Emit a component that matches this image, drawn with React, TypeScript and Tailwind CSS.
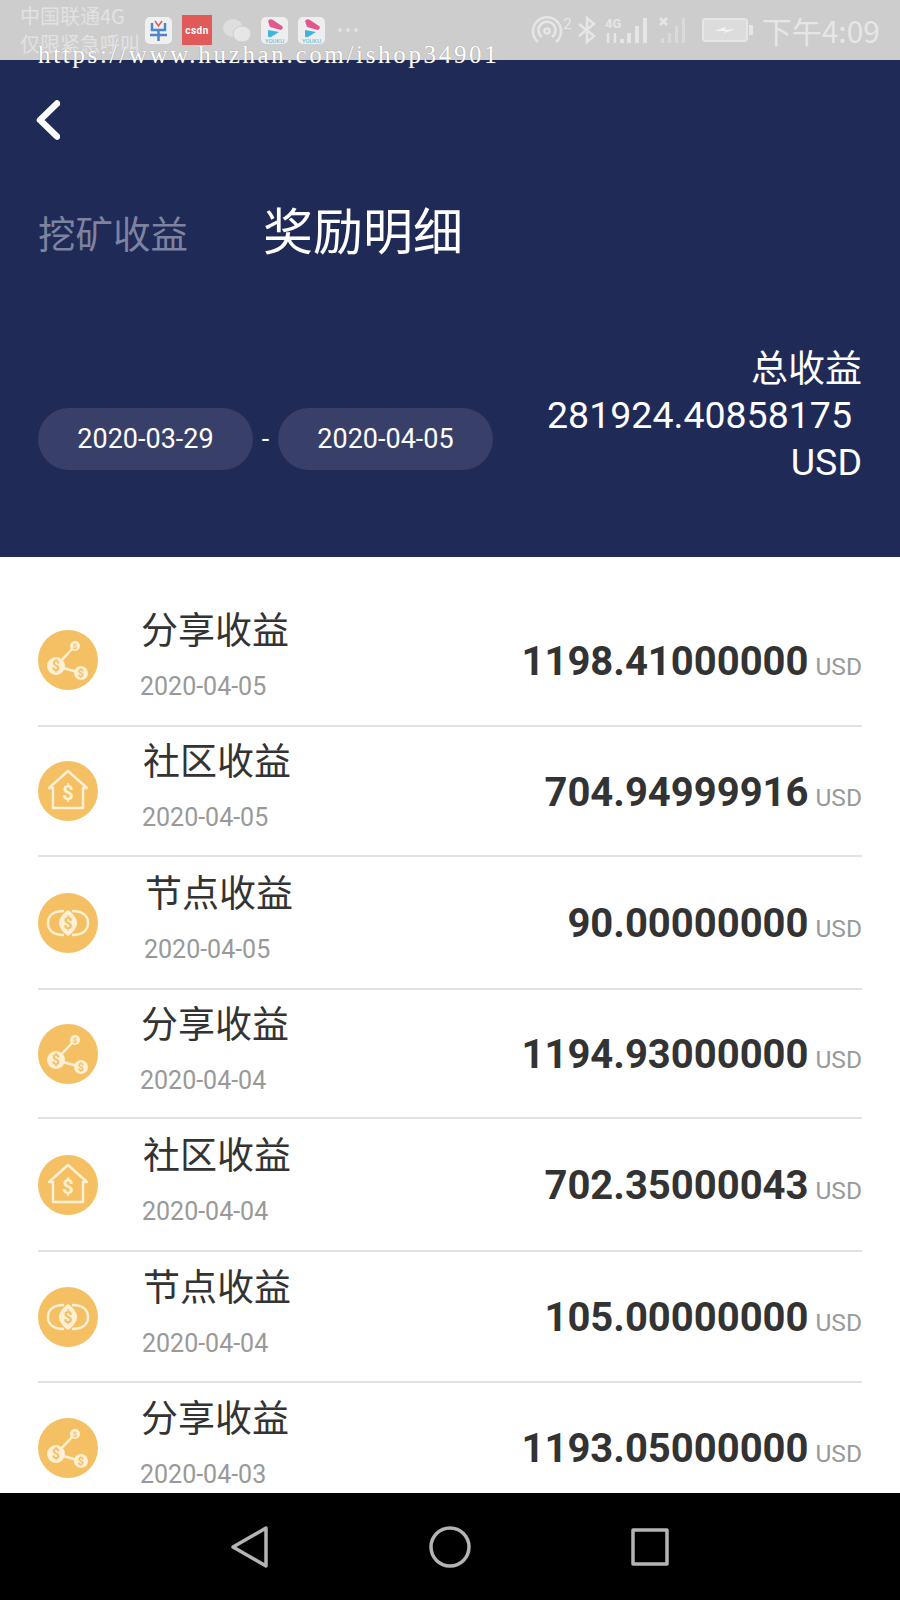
const cjk = "font-['Noto_Sans_CJK_SC','Noto_Sans',sans-serif]"

interface Row {
  kind: "share" | "community" | "node"
  title: string
  date: string
  amount: string
  height: string
  indent: string
}

const ROWS: Row[] = [
  { kind: "share", title: "分享收益", date: "2020-04-05", amount: "1198.41000000", height: "h-[132px]", indent: "ml-[43px]" },
  { kind: "community", title: "社区收益", date: "2020-04-05", amount: "704.94999916", height: "h-[130px]", indent: "ml-[45px]" },
  { kind: "node", title: "节点收益", date: "2020-04-05", amount: "90.00000000", height: "h-[133px]", indent: "ml-[47px]" },
  { kind: "share", title: "分享收益", date: "2020-04-04", amount: "1194.93000000", height: "h-[129px]", indent: "ml-[43px]" },
  { kind: "community", title: "社区收益", date: "2020-04-04", amount: "702.35000043", height: "h-[133px]", indent: "ml-[45px]" },
  { kind: "node", title: "节点收益", date: "2020-04-04", amount: "105.00000000", height: "h-[131px]", indent: "ml-[45px]" },
  { kind: "share", title: "分享收益", date: "2020-04-03", amount: "1193.05000000", height: "h-[131px]", indent: "ml-[43px]" },
]

function RowIcon({ kind }: { kind: Row["kind"] }) {
  return (
    <svg className="w-[60px] h-[60px] shrink-0" viewBox="0 0 60 60">
      <circle cx="30" cy="30" r="30" fill="#f5c063" />
      {kind === "share" && (
        <g>
          <path d="M37 16 18 36 43 43" fill="none" stroke="#fdf0d5" strokeWidth="2.500" />
          <circle cx="37" cy="16" r="5" fill="#fdf0d5" />
          <circle cx="18" cy="36" r="9" fill="#fdf0d5" />
          <circle cx="43" cy="43" r="7" fill="#fdf0d5" />
          <text x="37" y="19" fontSize="8" fontWeight="700" textAnchor="middle" fill="#f5c063" fontFamily="Roboto">$</text>
          <text x="18" y="41" fontSize="14" fontWeight="700" textAnchor="middle" fill="#f5c063" fontFamily="Roboto">$</text>
          <text x="43" y="47" fontSize="11" fontWeight="700" textAnchor="middle" fill="#f5c063" fontFamily="Roboto">$</text>
        </g>
      )}
      {kind === "community" && (
        <g>
          <path d="M15 27H11L30 10 49 27H45V47H15Z" fill="none" stroke="#fdf0d5" strokeWidth="2.500" strokeLinejoin="round" />
          <text x="30" y="39" fontSize="20" fontWeight="700" textAnchor="middle" fill="#fdf0d5" fontFamily="Roboto">$</text>
        </g>
      )}
      {kind === "node" && (
        <g>
          <path d="M26 18C14 18 10 24 10 30 10 36 14 42 26 42" fill="none" stroke="#fdf0d5" strokeWidth="2.500" />
          <path d="M34 18C46 18 50 24 50 30 50 36 46 42 34 42" fill="none" stroke="#fdf0d5" strokeWidth="2.500" />
          <path d="M30 17C36 21 39 26 39 30 39 34 36 39 30 43 24 39 21 34 21 30 21 26 24 21 30 17Z" fill="#fdf0d5" />
          <text x="30" y="36" fontSize="16" fontWeight="700" textAnchor="middle" fill="#f5c063" fontFamily="Roboto">$</text>
        </g>
      )}
    </svg>
  )
}

function Youku() {
  return (
    <svg className="w-[27px] h-[27px]" viewBox="0 0 27 27">
      <rect width="27" height="27" rx="5" fill="#eeeeee" />
      <path d="M7 4Q9 1 12 3L21 9Q23 11 20 13L9 10Z" fill="#e0588f" />
      <path d="M7 13 18 15 10 20Q7 21 7 19Z" fill="#3fb4de" />
      <text x="13.500" y="26" fontSize="6" textAnchor="middle" fill="#4fb6dd" fontFamily="Roboto">YOUKU</text>
    </svg>
  )
}

function StatusBar() {
  const ink = "#e6e6e6"
  return (
    <div className="h-[60px] bg-[#cdcdcd] flex items-center justify-between pl-[20px] pr-[20px] shrink-0">
      <div className="flex items-center">
        <div className={`${cjk} text-[#e2e2e2] text-[20px] leading-[28px] w-[125px] whitespace-nowrap`}>
          <div>中国联通4G</div>
          <div>仅限紧急呼叫</div>
        </div>
        <div className="flex items-center gap-[10px]">
          <svg className="w-[27px] h-[27px]" viewBox="0 0 27 27">
            <rect width="27" height="27" rx="5" fill="#f0f0f0" />
            <path d="M7 6V13H20V6M5 18H22M13.500 13V24" fill="none" stroke="#4a86c8" strokeWidth="2.500" />
            <path d="M10 4 13.500 9 17 4" fill="none" stroke="#d85a5a" strokeWidth="1.500" />
          </svg>
          <div className="w-[30px] h-[30px] bg-[#e05a5a] flex items-center justify-center text-white text-[10px] font-bold tracking-[0.5px] font-['Roboto',sans-serif]">
            csdn
          </div>
          <svg className="w-[29px] h-[27px]" viewBox="0 0 29 27">
            <ellipse cx="11" cy="11" rx="10" ry="9" fill="#dedede" />
            <ellipse cx="20" cy="17" rx="9" ry="8" fill="#e6e6e6" stroke="#cdcdcd" />
          </svg>
          <Youku />
          <Youku />
          <div className="ml-[3px] flex gap-[4px]">
            <span className="w-[4px] h-[4px] rounded-full bg-[#e2e2e2]" />
            <span className="w-[4px] h-[4px] rounded-full bg-[#e2e2e2]" />
            <span className="w-[4px] h-[4px] rounded-full bg-[#e2e2e2]" />
          </div>
        </div>
      </div>
      <div className="flex items-center">
        <svg className="w-[42px] h-[30px]" viewBox="0 0 42 30" fill="none" stroke={ink} strokeWidth="2.500">
          <path d="M7 27A14 14 0 1 1 25 27" />
          <path d="M11 22A8.500 8.500 0 1 1 21 22" />
          <circle cx="16" cy="16" r="2.500" />
        </svg>
        <span className="-ml-[10px] -mt-[12px] text-[15px] leading-none text-[#e6e6e6] font-['Roboto',sans-serif]">2</span>
        <svg className="ml-[6px] w-[18px] h-[28px]" viewBox="0 0 18 28" fill="none" stroke={ink} strokeWidth="2.500">
          <path d="M1 8 16 20 9 26V2L16 8 1 20" />
        </svg>
        <svg className="ml-[9px] w-[46px] h-[28px]" viewBox="0 0 46 28">
          <text x="0" y="12" fontSize="13" fontWeight="700" fill={ink} fontFamily="Roboto">4G</text>
          <path d="M3 27V17M10 27V17" stroke={ink} strokeWidth="2.500" />
          <g fill={ink}>
            <rect x="15" y="23" width="4" height="4" />
            <rect x="22" y="17" width="4" height="10" />
            <rect x="30" y="10" width="4" height="17" />
            <rect x="38" y="2" width="4" height="25" />
          </g>
        </svg>
        <svg className="ml-[8px] w-[30px] h-[28px]" viewBox="0 0 30 28">
          <path d="M1 2 8 9M8 2 1 9" stroke={ink} strokeWidth="2.500" />
          <g fill="#dadada">
            <rect x="2" y="22" width="3" height="5" />
            <rect x="9" y="17" width="3" height="10" />
            <rect x="16" y="10" width="3" height="17" />
            <rect x="23" y="2" width="3" height="25" />
          </g>
        </svg>
        <svg className="ml-[13px] w-[52px] h-[24px]" viewBox="0 0 52 24">
          <rect x="1" y="1" width="44" height="22" rx="3" fill="#dcdcdc" stroke={ink} strokeWidth="2" />
          <rect x="47" y="7" width="4" height="10" fill={ink} />
          <path d="M12 13 24 9 23 12 34 11 22 15 23 13Z" fill="#f4f4f4" />
        </svg>
        <span className={`${cjk} ml-[8px] text-[30px] leading-none text-[#e6e6e6] whitespace-nowrap`}>下午4:09</span>
      </div>
    </div>
  )
}

function Header() {
  return (
    <div className="h-[497px] bg-[#1f2a56] px-[38px] flex flex-col text-white shrink-0">
      <svg className="mt-[40px] -ml-[2px] w-[24px] h-[40px]" viewBox="0 0 24 40" fill="none" stroke="#ffffff" strokeWidth="6.500" strokeLinecap="round" strokeLinejoin="round">
        <path d="M21 3.500 4 20 21 36.500" />
      </svg>
      <div className={`${cjk} mt-[60px] h-[60px] flex items-center`}>
        <span className="text-[37.5px] text-[#7d83a0] w-[226px] translate-y-[2px]">挖矿收益</span>
        <span className="text-[50px] -translate-x-[1px] -translate-y-[2px]">奖励明细</span>
      </div>
      <div className="mt-[83px] flex justify-between items-end font-['Roboto',sans-serif]">
        <div className="flex items-center mb-[16px] text-[27px]">
          <div className="w-[215px] h-[62px] rounded-full bg-[#383f68] flex items-center justify-center">2020-03-29</div>
          <div className="w-[25px] text-center">-</div>
          <div className="w-[215px] h-[62px] rounded-full bg-[#383f68] flex items-center justify-center">2020-04-05</div>
        </div>
        <div className="text-right text-[37.5px] leading-[47px]">
          <div className={`${cjk} text-[37px]`}>总收益</div>
          <div className="pr-[10px] mt-[2px]">281924.40858175</div>
          <div>USD</div>
        </div>
      </div>
    </div>
  )
}

function ListRow({ row }: { row: Row }) {
  return (
    <div className={`${row.height} shrink-0 flex items-center border-b-2 border-[#e2e2e2]`}>
      <RowIcon kind={row.kind} />
      <div className={`${row.indent} mb-[14px]`}>
        <div className={`${cjk} text-[37px] leading-[48px] text-[#333333]`}>{row.title}</div>
        <div className="mt-[20px] -ml-[1px] text-[25px] leading-[30px] text-[#999999] font-['Roboto',sans-serif]">{row.date}</div>
      </div>
      <div className="ml-auto mt-[3px] flex items-baseline gap-[7px] font-['Roboto',sans-serif]">
        <span className="text-[40px] font-bold text-[#333333]">{row.amount}</span>
        <span className="text-[24.5px] text-[#999999]">USD</span>
      </div>
    </div>
  )
}

export default function App() {
  return (
    <div className="relative w-[900px] h-[1600px] overflow-hidden flex flex-col bg-white">
      <StatusBar />
      <Header />
      <div className="flex-1 min-h-0 overflow-hidden px-[38px] pt-[38px] flex flex-col">
        {ROWS.map((row, i) => (
          <ListRow key={i} row={row} />
        ))}
      </div>
      <div className="h-[107px] bg-black flex items-center justify-center gap-[156px] shrink-0">
        <svg className="w-[44px] h-[44px]" viewBox="0 0 44 44" fill="none" stroke="#b4b4b4" strokeWidth="3.500" strokeLinejoin="round">
          <path d="M5 22 38 3V41Z" />
        </svg>
        <svg className="w-[44px] h-[44px]" viewBox="0 0 44 44" fill="none" stroke="#b4b4b4" strokeWidth="3.500">
          <circle cx="22" cy="22" r="19" />
        </svg>
        <svg className="w-[44px] h-[44px]" viewBox="0 0 44 44" fill="none" stroke="#b4b4b4" strokeWidth="3.500" strokeLinejoin="round">
          <rect x="5" y="5" width="34" height="34" />
        </svg>
      </div>
      <div className="absolute left-[38px] top-[41px] text-[25px] leading-[28px] tracking-[2.67px] text-white font-['Liberation_Serif',serif] whitespace-nowrap [text-shadow:0_0_1px_#8a8a8a]">
        https://www.huzhan.com/ishop34901
      </div>
    </div>
  )
}
